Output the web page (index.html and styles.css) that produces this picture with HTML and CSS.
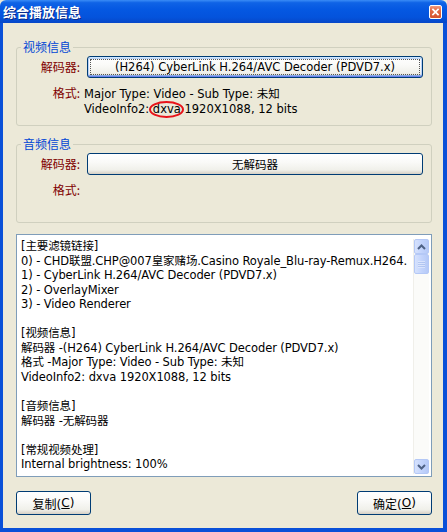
FILE: index.html
```html
<!DOCTYPE html>
<html lang="zh-CN">
<head>
<meta charset="utf-8">
<title>综合播放信息</title>
<link rel="stylesheet" href="styles.css">
</head>
<body>
<div class="window">
  <div class="titlebar">
    <span class="title">综合播放信息</span>
    <span class="close-btn" aria-label="关闭">
      <svg width="13" height="14" viewBox="0 0 13 14"><path d="M3.5 4 L9.5 10 M9.5 4 L3.5 10" stroke="#fff" stroke-width="2" stroke-linecap="square"/></svg>
    </span>
  </div>
  <div class="frame">
    <div class="client">
      <fieldset class="group group-video">
        <legend>视频信息</legend>
        <div class="row">
          <span class="label label-btn">解码器:</span>
          <button class="xpbtn decoder focused"><span class="focus-ring">(H264) CyberLink H.264/AVC Decoder (PDVD7.x)</span></button>
        </div>
        <div class="row row-format">
          <span class="label">格式:</span>
          <div class="format-text">Major Type: Video - Sub Type: 未知<br>VideoInfo2: <span class="mark">dxva</span> 1920X1088, 12 bits</div>
        </div>
      </fieldset>

      <fieldset class="group group-audio">
        <legend>音频信息</legend>
        <div class="row">
          <span class="label label-btn">解码器:</span>
          <button class="xpbtn decoder">无解码器</button>
        </div>
        <div class="row row-format">
          <span class="label">格式:</span>
          <div class="format-text"></div>
        </div>
      </fieldset>

      <div class="log">
        <div class="log-text">[主要滤镜链接]
0) - CHD联盟.CHP@007皇家赌场.Casino Royale_Blu-ray-Remux.H264.
1) - CyberLink H.264/AVC Decoder (PDVD7.x)
2) - OverlayMixer
3) - Video Renderer

[视频信息]
解码器 -(H264) CyberLink H.264/AVC Decoder (PDVD7.x)
格式 -Major Type: Video - Sub Type: 未知
VideoInfo2: dxva 1920X1088, 12 bits

[音频信息]
解码器 -无解码器

[常规视频处理]
Internal brightness: 100%</div>
        <div class="scrollbar">
          <div class="sb-btn">
            <svg width="9" height="6" viewBox="0 0 9 6"><path d="M1 5 L4.5 1.5 L8 5" fill="none" stroke="#4D6185" stroke-width="2"/></svg>
          </div>
          <div class="sb-thumb"><span class="grip"></span></div>
          <div class="sb-track"></div>
          <div class="sb-btn">
            <svg width="9" height="6" viewBox="0 0 9 6"><path d="M1 1 L4.5 4.5 L8 1" fill="none" stroke="#4D6185" stroke-width="2"/></svg>
          </div>
        </div>
      </div>

      <div class="actions">
        <button class="xpbtn action">复制(<u>C</u>)</button>
        <button class="xpbtn action">确定(<u>O</u>)</button>
      </div>
    </div>
  </div>
</div>
</body>
</html>
```

FILE: styles.css
```css
html, body {
  margin: 0;
  padding: 0;
  width: 447px;
  height: 532px;
  overflow: hidden;
  background: #ECE9D8;
}

.window {
  width: 447px;
  height: 532px;
  display: flex;
  flex-direction: column;
  font-family: "DejaVu Sans", "Noto Sans CJK SC", sans-serif;
  font-size: 11.5px;
  color: #000;
}

.titlebar {
  height: 23px;
  flex: none;
  display: flex;
  align-items: center;
  justify-content: space-between;
  padding: 0 5px 0 3px;
  background: linear-gradient(to bottom, #3A8CF6 0%, #0F63E6 12%, #0558E2 40%, #0453DC 75%, #0747C8 100%);
  border-radius: 6px 6px 0 0;
}

.title {
  color: #fff;
  font-family: "Noto Sans CJK SC", sans-serif;
  font-weight: bold;
  font-size: 13px;
  line-height: 16px;
  text-shadow: 1px 1px 0 #0A2A88;
  margin-top: 1px;
}

.close-btn {
  width: 13px;
  height: 14px;
  display: flex;
  align-items: center;
  justify-content: center;
  background: linear-gradient(to bottom, #F09A7E 0%, #E26A45 35%, #D4532E 100%);
  border: 1px solid #fff;
  border-radius: 2px;
  box-sizing: border-box;
  margin-top: 1px;
}

.frame {
  flex: 1;
  display: flex;
  border-style: solid;
  border-color: #0A50D8;
  border-width: 0 4px 4px 3px;
}

.client {
  flex: 1;
  display: flex;
  flex-direction: column;
  background: #ECE9D8;
  padding: 16px 11px 0 13px;
}

.group {
  margin: 0;
  border: 1px solid #D0D0BF;
  border-radius: 3px;
  padding: 0 8px 8px;
}

.group + .group {
  margin-top: 10px;
}

.group legend {
  color: #0046D5;
  font-family: "Noto Sans CJK SC", sans-serif;
  font-size: 12px;
  line-height: 16px;
  padding: 0 2px;
  margin-left: -4px;
}

.row {
  display: grid;
  grid-template-columns: 55px 1fr;
  column-gap: 7px;
}

.row:first-of-type {
  margin-top: 1px;
}

.label {
  text-align: right;
  color: #800000;
  font-family: "Noto Sans CJK SC", sans-serif;
  font-size: 12px;
  line-height: 15px;
}

.label-btn {
  line-height: 22px;
}

.row-format {
  margin-top: 7px;
}

.format-text {
  min-height: 30px;
  padding-top: 2px;
  line-height: 15px;
  white-space: nowrap;
  margin-left: -3px;
}

.mark {
  position: relative;
}

.mark::after {
  content: "";
  position: absolute;
  left: -4px;
  right: -3px;
  top: -1px;
  bottom: -2px;
  border: 2px solid #E8141A;
  border-radius: 50%;
}

.xpbtn {
  font-family: "DejaVu Sans", "Noto Sans CJK SC", sans-serif;
  font-size: 11.5px;
  color: #000;
  border: 1px solid #003C74;
  border-radius: 3px;
  background: linear-gradient(to bottom, #FFFFFF 0%, #FAFAF8 40%, #F0F0EA 80%, #D6D0C5 100%);
  padding: 0;
  margin: 0;
  box-sizing: border-box;
  display: flex;
  align-items: center;
  justify-content: center;
}

.decoder {
  height: 22px;
  width: 100%;
}

.focused {
  box-shadow: inset 0 1px 0 #CEE7FF, inset 0 -1px 0 #6982EE, inset 1px 0 0 #B9D1F8, inset -1px 0 0 #B9D1F8, inset 0 2px 0 #BCD4F6, inset 0 -2px 0 #89ADE4;
}

.focus-ring {
  display: flex;
  align-items: center;
  justify-content: center;
  width: calc(100% - 6px);
  height: calc(100% - 6px);
  outline: 1px dotted #555;
}

.log {
  margin-top: 11px;
  height: 243px;
  box-sizing: border-box;
  border: 1px solid #7F9DB9;
  background: #fff;
  display: flex;
}

.log-text {
  flex: 1;
  min-width: 0;
  overflow: hidden;
  white-space: pre;
  padding: 4px 0 0 4px;
  line-height: 14.55px;
  letter-spacing: -0.1px;
}

.scrollbar {
  width: 15px;
  margin: 4px 2px 2px 0;
  display: flex;
  flex-direction: column;
  background: #FBFBF9;
  border-left: 1px solid #F0EFEA;
}

.sb-btn,
.sb-thumb {
  box-sizing: border-box;
  border: 1px solid #B4C8F6;
  border-radius: 2px;
  background: linear-gradient(to right, #D6E2FD 0%, #C3D4FC 50%, #B5C9F7 100%);
  display: flex;
  align-items: center;
  justify-content: center;
}

.sb-btn {
  height: 15px;
}

.sb-thumb {
  height: 20px;
}

.grip {
  width: 7px;
  height: 7px;
  background: repeating-linear-gradient(to bottom, #E8EEFD 0 1px, #A7BDEB 1px 2px);
  opacity: 0.6;
}

.sb-track {
  flex: 1;
}

.actions {
  display: flex;
  justify-content: space-between;
  margin-top: 14px;
}

.action {
  width: 75px;
  height: 24px;
  font-size: 12px;
}

.action u {
  text-decoration: underline;
}
```
